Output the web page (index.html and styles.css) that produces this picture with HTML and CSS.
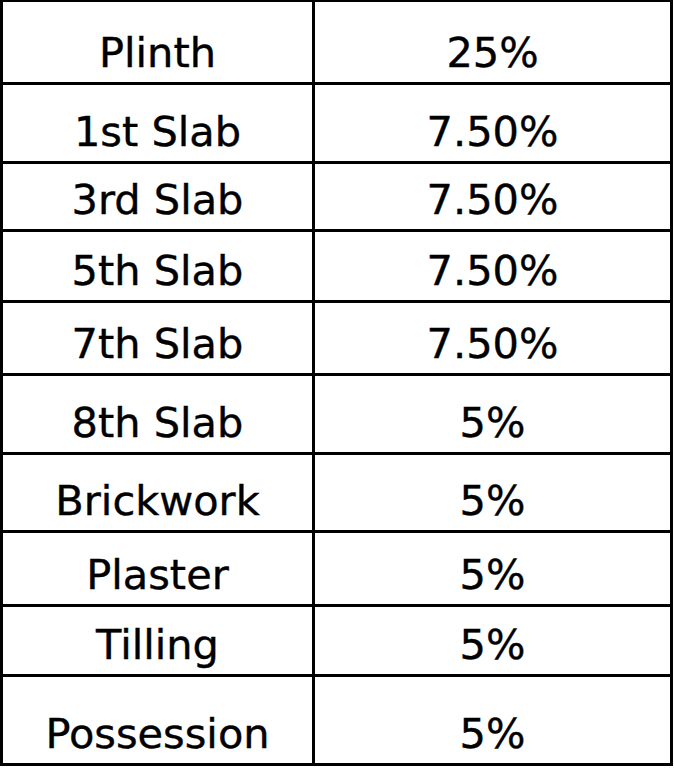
FILE: index.html
```html
<!DOCTYPE html>
<html>
<head>
<meta charset="utf-8">
<link rel="stylesheet" href="styles.css">
</head>
<body>
<div class="table">
  <div class="cell">Plinth</div><div class="cell">25%</div>
  <div class="cell">1st Slab</div><div class="cell">7.50%</div>
  <div class="cell">3rd Slab</div><div class="cell">7.50%</div>
  <div class="cell">5th Slab</div><div class="cell">7.50%</div>
  <div class="cell">7th Slab</div><div class="cell">7.50%</div>
  <div class="cell">8th Slab</div><div class="cell">5%</div>
  <div class="cell">Brickwork</div><div class="cell">5%</div>
  <div class="cell">Plaster</div><div class="cell">5%</div>
  <div class="cell">Tilling</div><div class="cell">5%</div>
  <div class="cell">Possession</div><div class="cell">5%</div>
</div>
</body>
</html>
```

FILE: styles.css
```css
html, body {
  margin: 0;
  padding: 0;
  background: #fff;
}
.table {
  width: 673px;
  box-sizing: border-box;
  display: grid;
  grid-template-columns: 309px 355px;
  grid-template-rows: 80px 76px 65px 68px 70px 76px 75px 71px 67px 86px;
  gap: 3px;
  padding: 2px 3px 3px 3px;
  background: #000;
  font-family: "DejaVu Sans", sans-serif;
  font-size: 41.5px;
  color: #000;
  -webkit-text-stroke: 0.4px #000;
}
.cell {
  background: #fff;
  display: flex;
  align-items: flex-end;
  justify-content: center;
  padding-bottom: 5px;
  box-sizing: border-box;
  line-height: normal;
}
```
